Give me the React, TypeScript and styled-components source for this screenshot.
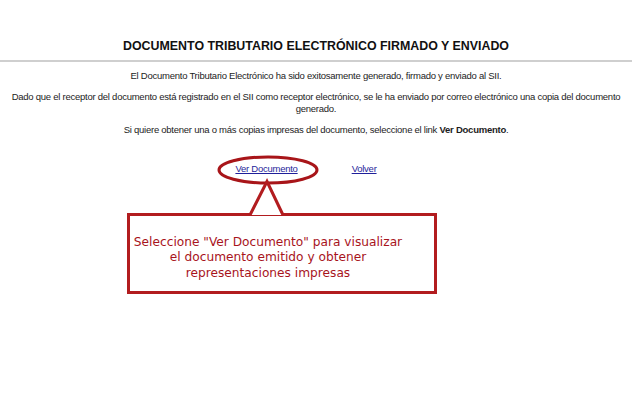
import React from "react";
import styled, { createGlobalStyle } from "styled-components";

const Global = createGlobalStyle`
  html, body { margin: 0; padding: 0; background: #ffffff; }
  body { font-family: "Liberation Sans", Arial, sans-serif; color: #1c1c1c; }
`;

const Page = styled.div`
  width: 632px;
  height: 420px;
  display: flex;
  flex-direction: column;
  align-items: stretch;
  overflow: hidden;
`;

const Title = styled.h1`
  margin: 0;
  padding-top: 39px;
  height: 21px;
  text-align: center;
  font-size: 12.4px;
  font-weight: bold;
  color: #111;
  line-height: 14px;
`;

const Rule = styled.div`
  height: 2px;
  background: #cfcfcf;
`;

const Message = styled.div`
  display: flex;
  flex-direction: column;
  align-items: center;
  gap: 9px;
  padding: 8px 6px 0;
  font-size: 9.5px;
  letter-spacing: -0.25px;
  line-height: 12px;
  text-align: center;
`;

const Para = styled.p`
  margin: 0;
`;

const LinkRow = styled.div`
  position: relative;
  display: flex;
  justify-content: center;
  gap: 54px;
  margin-top: 27px;
  padding-right: 20px;
  font-size: 9.5px;
  letter-spacing: -0.25px;
  line-height: 12px;
`;

const Link = styled.a`
  color: #1f1f9a;
  text-decoration: underline;
  cursor: pointer;
`;

const Oval = styled.svg`
  position: absolute;
  left: 217px;
  top: -8px;
  overflow: visible;
`;

const CalloutWrap = styled.div`
  position: relative;
  margin-top: 38px;
  margin-left: 127px;
  width: 310px;
`;

const CalloutBox = styled.div`
  box-sizing: border-box;
  height: 81px;
  border: 3px solid #b21c1f;
  display: flex;
  align-items: center;
  justify-content: center;
  padding: 9px 28px 0 0;
  text-align: center;
  font-family: "DejaVu Sans", Verdana, sans-serif;
  font-size: 12.2px;
  line-height: 15.5px;
  color: #a8141c;
`;

const Pointer = styled.svg`
  position: absolute;
  left: 121px;
  top: -33px;
  overflow: visible;
`;

export default function App() {
  return (
    <>
      <Global />
      <Page>
        <Title>DOCUMENTO TRIBUTARIO ELECTRÓNICO FIRMADO Y ENVIADO</Title>
        <Rule />
        <Message>
          <Para>
            El Documento Tributario Electrónico ha sido exitosamente generado, firmado y enviado al SII.
          </Para>
          <Para>
            Dado que el receptor del documento está registrado en el SII como receptor electrónico, se le ha enviado por correo electrónico una copia del documento generado.
          </Para>
          <Para>
            Si quiere obtener una o más copias impresas del documento, seleccione el link <b>Ver Documento</b>.
          </Para>
        </Message>
        <LinkRow>
          <Link>Ver Documento</Link>
          <Link>Volver</Link>
          <Oval width="102" height="30" viewBox="0 0 102 30">
            <ellipse cx="51" cy="15" rx="49" ry="13" fill="none" stroke="#a81519" strokeWidth="3" />
          </Oval>
        </LinkRow>
        <CalloutWrap>
          <Pointer width="40" height="36" viewBox="0 0 40 36">
            <polyline points="2,35 19,1.5 35,35" fill="#ffffff" stroke="#b21c1f" strokeWidth="3" strokeLinejoin="miter" />
          </Pointer>
          <CalloutBox>
            Seleccione "Ver Documento" para visualizar
            <br />
            el documento emitido y obtener
            <br />
            representaciones impresas
          </CalloutBox>
        </CalloutWrap>
      </Page>
    </>
  );
}
